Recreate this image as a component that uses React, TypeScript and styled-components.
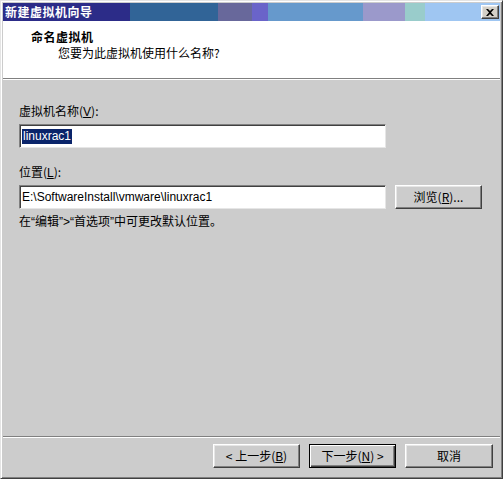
import styled, { createGlobalStyle, css } from 'styled-components';

const GlobalStyle = createGlobalStyle`
  html, body {
    margin: 0;
    padding: 0;
    background: #cccccc;
  }
  * {
    box-sizing: border-box;
  }
`;

const titleBands = [
  { width: 127, color: '#2c2c88' },
  { width: 88, color: '#316497' },
  { width: 34, color: '#68689b' },
  { width: 16, color: '#6a64c9' },
  { width: 95, color: '#6699cc' },
  { width: 42, color: '#9b99cb' },
  { width: 20, color: '#99cccb' },
];

const raised = css`
  border-top: 1px solid #ffffff;
  border-left: 1px solid #ffffff;
  border-right: 1px solid #404040;
  border-bottom: 1px solid #404040;
  box-shadow: inset -1px -1px 0 #808080, inset 1px 1px 0 #e6e6e6;
`;

const App: React.FC = () => {
  return (
    <>
      <GlobalStyle />
      <Window>
        <TitleBar>
          <Bands>
            {titleBands.map((b, i) => (
              <Band key={i} $color={b.color} style={{ width: b.width }} />
            ))}
            <Band $color="#9fc6f2" style={{ flex: 1 }} />
          </Bands>
          <TitleText>新建虚拟机向导</TitleText>
          <CloseButton>
            <svg width="8" height="7" viewBox="0 0 8 7">
              <path d="M0 0h2l2 2 2-2h2L5 3.5 8 7H6L4 5 2 7H0l3-3.5z" fill="#000" />
            </svg>
          </CloseButton>
        </TitleBar>

        <Header>
          <HeaderTitle>命名虚拟机</HeaderTitle>
          <HeaderSub>您要为此虚拟机使用什么名称?</HeaderSub>
        </Header>
        <Rule />

        <Body>
          <Label>
            虚拟机名称(<u>V</u>):
          </Label>
          <FieldRow>
            <Field>
              <Selected>linuxrac1</Selected>
            </Field>
          </FieldRow>

          <Label $top={17}>
            位置(<u>L</u>):
          </Label>
          <FieldRow>
            <Field>E:\SoftwareInstall\vmware\linuxrac1</Field>
            <Button $width={87}>
              浏览(<u>R</u>)...
            </Button>
          </FieldRow>
          <Note>在“编辑”&gt;“首选项”中可更改默认位置。</Note>
        </Body>

        <Rule />
        <Footer>
          <Button $width={87}>
            &lt; 上一步(<u>B</u>)
          </Button>
          <Button $width={87} $default>
            下一步(<u>N</u>) &gt;
          </Button>
          <Button $width={88}>取消</Button>
        </Footer>
      </Window>
    </>
  );
};

export default App;

// Styled components

const Window = styled.div`
  width: 503px;
  height: 479px;
  display: flex;
  flex-direction: column;
  padding: 2px;
  background: #cccccc;
  border-top: 1px solid #e4e4e4;
  border-left: 1px solid #e4e4e4;
  border-right: 1px solid #404040;
  border-bottom: 1px solid #404040;
  box-shadow: inset 1px 1px 0 #ffffff, inset -1px -1px 0 #808080;
  font-family: 'Liberation Sans', 'Noto Sans CJK SC', sans-serif;
  font-size: 12px;
  color: #000;
  overflow: hidden;
`;

const TitleBar = styled.div`
  position: relative;
  height: 18px;
  flex: none;
  display: flex;
  align-items: center;
`;

const Bands = styled.div`
  position: absolute;
  inset: 0;
  display: flex;
`;

const Band = styled.div<{ $color: string }>`
  height: 100%;
  flex: none;
  background: ${({ $color }) => $color};
`;

const TitleText = styled.span`
  position: relative;
  padding-left: 2px;
  color: #fff;
  font-weight: bold;
  font-size: 12px;
  line-height: 14px;
  letter-spacing: 0.5px;
  font-family: 'Noto Sans CJK SC', sans-serif;
`;

const CloseButton = styled.div`
  position: absolute;
  right: 1px;
  top: 2px;
  width: 18px;
  height: 14px;
  display: flex;
  align-items: center;
  justify-content: center;
  background: #d4d0c8;
  ${raised}
`;

const Header = styled.div`
  height: 57px;
  flex: none;
  background: #ffffff;
  padding: 9px 0 0 28px;
  font-family: 'Noto Sans CJK SC', sans-serif;
`;

const HeaderTitle = styled.div`
  font-weight: bold;
  line-height: 14px;
  letter-spacing: 0.5px;
`;

const HeaderSub = styled.div`
  margin-top: 2px;
  padding-left: 27px;
  line-height: 14px;
`;

const Rule = styled.div`
  height: 2px;
  flex: none;
  border-top: 1px solid #808080;
  border-bottom: 1px solid #ffffff;
`;

const Body = styled.div`
  flex: 1;
  padding: 24px 0 0 16px;
  display: flex;
  flex-direction: column;
`;

const Label = styled.div<{ $top?: number }>`
  margin-top: ${({ $top }) => $top ?? 0}px;
  line-height: 14px;
  margin-bottom: 5px;
  font-family: 'Noto Sans CJK SC', sans-serif;

  u {
    font-family: 'Liberation Sans', sans-serif;
  }
`;

const FieldRow = styled.div`
  display: flex;
  align-items: center;
  gap: 9px;
`;

const Field = styled.div`
  width: 367px;
  height: 24px;
  display: flex;
  align-items: center;
  padding-left: 2px;
  background: #ffffff;
  border-top: 1px solid #808080;
  border-left: 1px solid #808080;
  border-right: 1px solid #e6e6e6;
  border-bottom: 1px solid #e6e6e6;
  box-shadow: inset 1px 1px 0 #404040;
  font-family: 'Liberation Sans', sans-serif;
  font-size: 12px;
  white-space: nowrap;
`;

const Selected = styled.span`
  background: #0a246a;
  color: #ffffff;
  line-height: 15px;
  padding: 0 1px;
`;

const Note = styled.div`
  margin-top: 6px;
  line-height: 14px;
  font-family: 'Liberation Sans', 'Noto Sans CJK SC', sans-serif;
`;

const Button = styled.div<{ $width: number; $default?: boolean }>`
  width: ${({ $width }) => $width}px;
  height: 24px;
  flex: none;
  display: flex;
  align-items: center;
  justify-content: center;
  background: #cccccc;
  font-family: 'Noto Sans CJK SC', sans-serif;
  font-size: 12px;
  line-height: 14px;
  ${({ $default }) =>
    $default
      ? css`
          border: 1px solid #000000;
          box-shadow: inset 1px 1px 0 #ffffff, inset -1px -1px 0 #404040, inset -2px -2px 0 #808080;
        `
      : raised}
`;

const Footer = styled.div`
  flex: none;
  height: 38px;
  display: flex;
  justify-content: flex-end;
  align-items: flex-start;
  gap: 9px;
  padding: 6px 7px 0 0;
`;
